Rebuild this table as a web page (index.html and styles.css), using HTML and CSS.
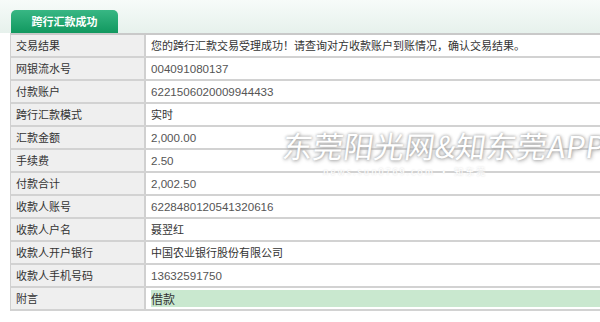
FILE: index.html
```html
<!DOCTYPE html>
<html lang="zh">
<head>
<meta charset="utf-8">
<link rel="stylesheet" href="styles.css">
</head>
<body>
<div class="page">
  <div class="head">
    <div class="tab">跨行汇款成功</div>
  </div>
  <div class="table">
    <div class="row"><div class="lbl">交易结果</div><div class="val">您的跨行汇款交易受理成功！请查询对方收款账户到账情况，确认交易结果。</div></div>
    <div class="row"><div class="lbl">网银流水号</div><div class="val num">004091080137</div></div>
    <div class="row"><div class="lbl">付款账户</div><div class="val num">6221506020009944433</div></div>
    <div class="row"><div class="lbl">跨行汇款模式</div><div class="val">实时</div></div>
    <div class="row"><div class="lbl">汇款金额</div><div class="val num">2,000.00</div></div>
    <div class="row"><div class="lbl">手续费</div><div class="val num">2.50</div></div>
    <div class="row"><div class="lbl">付款合计</div><div class="val num">2,002.50</div></div>
    <div class="row"><div class="lbl">收款人账号</div><div class="val num">6228480120541320616</div></div>
    <div class="row"><div class="lbl">收款人户名</div><div class="val">聂翌红</div></div>
    <div class="row"><div class="lbl">收款人开户银行</div><div class="val">中国农业银行股份有限公司</div></div>
    <div class="row"><div class="lbl">收款人手机号码</div><div class="val num">13632591750</div></div>
    <div class="row"><div class="lbl">附言</div><div class="val"><span class="memo">借款</span></div></div>
  </div>
  <div class="mark">
    <div class="mark-title">东莞阳光网&amp;知东莞APP</div>
    <div class="mark-sub">news.sun0769.com · 知东莞</div>
  </div>
</div>
</body>
</html>
```
FILE: styles.css
```css
html, body {
  margin: 0;
  padding: 0;
  background: #ffffff;
}
.page {
  position: relative;
  width: 600px;
  height: 322px;
  overflow: hidden;
  font-family: "Noto Sans CJK SC", "Liberation Sans", sans-serif;
  font-size: 11px;
  color: #333333;
}
.head {
  height: 33px;
  box-sizing: border-box;
  padding: 10px 0 0 11px;
  background: linear-gradient(#f7fbf9, #e6f1ec);
  display: flex;
  align-items: flex-end;
}
.tab {
  width: 107px;
  height: 23px;
  box-sizing: border-box;
  border-radius: 5px 5px 0 0;
  background: linear-gradient(#38b784, #11985f);
  color: #ffffff;
  font-weight: bold;
  font-size: 11px;
  line-height: 23px;
  text-align: center;
}
.table {
  margin-left: 10px;
  border-top: 2px solid #c9c9c9;
  border-left: 1px solid #d0d0d0;
  display: flex;
  flex-direction: column;
}
.row {
  display: grid;
  grid-template-columns: 135px 1fr;
  height: 23px;
  box-sizing: border-box;
  border-bottom: 2px solid #d2d2d2;
}
.lbl {
  background: #efefef;
  border-right: 2px solid #d0d0d0;
  padding-left: 5px;
  line-height: 21px;
  color: #333;
}
.val {
  padding-left: 5px;
  line-height: 21px;
  white-space: nowrap;
  display: flex;
  align-items: center;
}
.num {
  font-family: "Liberation Sans", sans-serif;
  font-size: 11.6px;
  color: #555;
}
.memo {
  display: block;
  flex: 1;
  height: 17px;
  line-height: 17px;
  font-size: 12px;
  background: #c9e8cf;
}
.mark {
  position: absolute;
  left: 283px;
  top: 123px;
  width: 360px;
  pointer-events: none;
}
.mark-title {
  font-size: 30px;
  color: #ffffff;
  white-space: nowrap;
  letter-spacing: 0.5px;
  text-shadow: 0 0 3px #9a9a9a, 1px 1px 4px #b0b0b0;
  transform: skewX(-8deg);
}
.mark-sub {
  margin-top: -2px;
  margin-left: 40px;
  font-size: 9px;
  color: #ffffff;
  text-shadow: 0 0 2px #d0d0d0;
  letter-spacing: 2px;
}
```
